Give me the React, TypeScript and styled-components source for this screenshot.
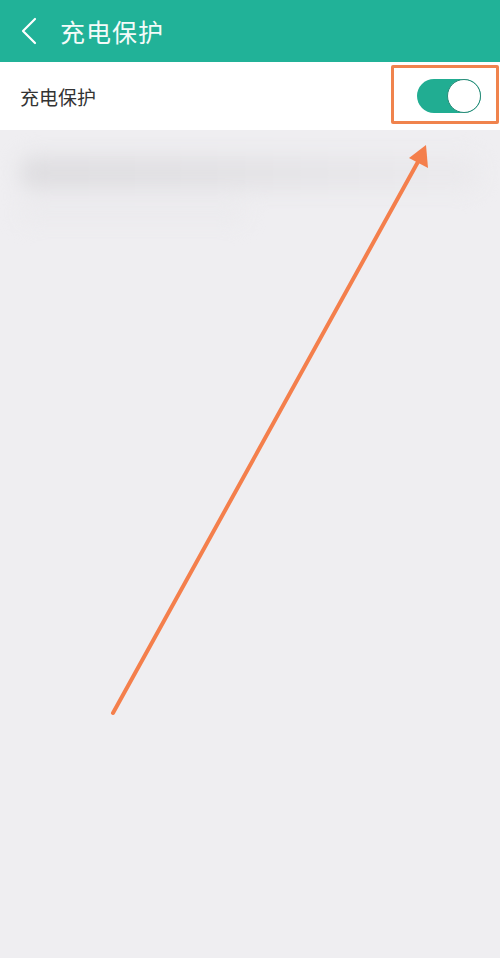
import React from 'react'
import styled, { createGlobalStyle } from 'styled-components'

const GlobalStyle = createGlobalStyle`
  html, body {
    margin: 0;
    padding: 0;
    background: #efeef1;
    font-family: "Noto Sans CJK SC", "Noto Sans", sans-serif;
  }
`

const Page = styled.div`
  position: relative;
  width: 500px;
  height: 958px;
  overflow: hidden;
  background: #efeef1;
`

const Header = styled.header`
  display: flex;
  align-items: center;
  height: 62px;
  padding-left: 20px;
  gap: 22px;
  background: #21b298;
  color: #fff;
`

const Title = styled.h1`
  margin: 0;
  font-size: 25px;
  font-weight: 400;
  letter-spacing: 1px;
  color: #f4fbf9;
`

const Row = styled.div`
  display: flex;
  align-items: center;
  justify-content: space-between;
  height: 68px;
  padding: 0 19px 0 20px;
  background: #fff;
`

const Label = styled.span`
  font-size: 19px;
  color: #333;
`

const Track = styled.div<{ $on: boolean }>`
  display: flex;
  justify-content: ${({ $on }) => ($on ? 'flex-end' : 'flex-start')};
  align-items: center;
  width: 64px;
  height: 34px;
  border-radius: 17px;
  background: ${({ $on }) => ($on ? '#21ad92' : '#d6d6d6')};
`

const Knob = styled.div`
  width: 34px;
  height: 34px;
  border-radius: 50%;
  background: #fff;
  border: 1.5px solid #2a8a78;
  box-sizing: border-box;
`

const Note = styled.div`
  display: flex;
  flex-direction: column;
  gap: 14px;
  padding: 26px 20px 0;
  filter: blur(10px);
`

const NoteLine = styled.div<{ $width: number; $tone: string; $height: number }>`
  width: ${({ $width }) => $width}px;
  height: ${({ $height }) => $height}px;
  border-radius: 14px;
  background: ${({ $tone }) => $tone};
`

const Highlight = styled.div`
  position: absolute;
  left: 391px;
  top: 65px;
  width: 108px;
  height: 59px;
  border: 3px solid #f0834d;
  border-radius: 2px;
  box-sizing: border-box;
`

const Overlay = styled.svg`
  position: absolute;
  left: 0;
  top: 0;
  pointer-events: none;
`

const Switch = ({ on }: { on: boolean }) => (
  <Track $on={on}>
    <Knob />
  </Track>
)

const App = () => (
  <>
    <GlobalStyle />
    <Page>
      <Header>
        <svg width="18" height="28" viewBox="0 0 18 28">
          <path d="M15 2 L3 14 L15 26" fill="none" stroke="#fff" strokeWidth="2.2" strokeLinecap="round" strokeLinejoin="round" />
        </svg>
        <Title>充电保护</Title>
      </Header>
      <Row>
        <Label>充电保护</Label>
        <Switch on />
      </Row>
      <Note>
        <NoteLine
          $width={460}
          $height={34}
          $tone="linear-gradient(90deg, #dedde0, #e2e1e4 40%, #e7e6e9 70%, #ebeaed)"
        />
        <NoteLine $width={225} $height={18} $tone="#ebeaed" />
      </Note>
      <Highlight />
      <Overlay width="500" height="958" viewBox="0 0 500 958">
        <line x1="113" y1="713" x2="419" y2="160" stroke="#f47f4c" strokeWidth="4" strokeLinecap="round" />
        <polygon points="426,145 428,168 409,158" fill="#f47f4c" />
      </Overlay>
    </Page>
  </>
)

export default App
